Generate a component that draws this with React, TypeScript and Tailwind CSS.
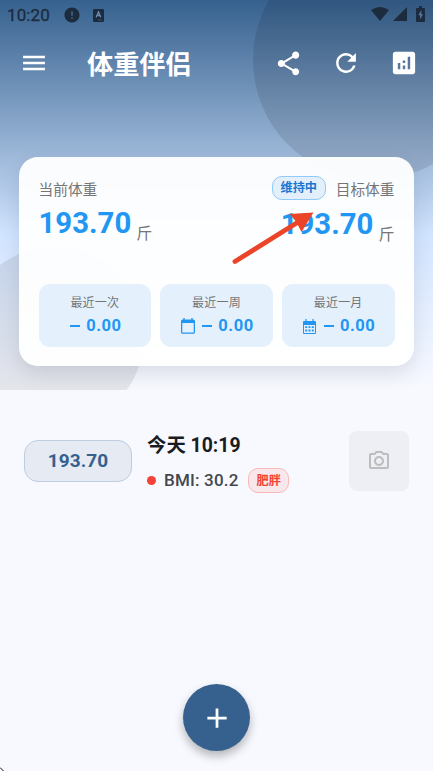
import React from 'react';
import {
  MdMenu, MdShare, MdRefresh, MdAnalytics,
  MdOutlineCameraAlt, MdAdd, MdError,
} from 'react-icons/md';

function StatusBar() {
  return (
    <div className="flex h-[30px] items-center text-[#1c2b3d]">
      <span className="ml-[7px] w-[44px] whitespace-nowrap text-[17px] leading-[30px] tracking-[0.1px] [-webkit-text-stroke:0.3px_#1c2b3d]">10:20</span>
      <MdError className="ml-[12px] size-[18px]" />
      <svg className="ml-[12px] h-[13px] w-[11px]" viewBox="0 0 11 13">
        <rect width="11" height="13" rx="1.2" fill="currentColor" />
        <path d="M3.2 8.2 5.5 2.8 7.8 8.2M4 6.5h3" fill="none" stroke="#6c8db1" strokeWidth="1.3" />
        <path d="M5.5 11h1M7.5 11h1" stroke="#6c8db1" strokeWidth=".8" />
      </svg>
      <div className="ml-auto mr-[8px] mt-[-2px] flex items-center">
        <svg className="h-[14px] w-[18px]" viewBox="0 0 18 14"><path d="M0 3Q9-3 18 3L9 14Z" fill="currentColor" /></svg>
        <svg className="ml-[4px] h-[14px] w-[14px]" viewBox="0 0 14 14"><path d="M14 0V14H0Z" fill="currentColor" /></svg>
        <svg className="ml-[9px] h-[16px] w-[9px]" viewBox="0 0 9 16">
          <path d="M3 0h3v2h2q1 0 1 1v12q0 1-1 1H1q-1 0-1-1V3q0-1 1-1h2Z" fill="currentColor" />
          <path d="M5.500 4 2.300 9.200h1.900V13.500L7 8.200H5.200Z" fill="#5379a1" />
        </svg>
      </div>
    </div>
  );
}

function Dash() {
  return <span className="h-[1.5px] w-[10px] bg-[#2196f3]" />;
}

function CalendarWeek() {
  return (
    <svg className="mr-[7px] h-[16px] w-[14px]" viewBox="0 0 14 16">
      <path d="M1.500 1.500h11Q14 1.500 14 3v11.200q0 1.500-1.500 1.500h-11Q0 15.700 0 14.200V3q0-1.500 1.500-1.500ZM1.300 5v9.400h11.400V5Z" fill="currentColor" fillRule="evenodd" />
      <path d="M3 0v2M11 0v2" stroke="currentColor" strokeWidth="1.400" />
    </svg>
  );
}

function CalendarMonth() {
  return (
    <svg className="mr-[8px] h-[15px] w-[13px]" viewBox="0 0 13 15">
      <path d="M1 2h11q1 0 1 1v11q0 1-1 1H1q-1 0-1-1V3q0-1 1-1ZM1 6v8h11V6Z" fill="currentColor" fillRule="evenodd" />
      <path d="M3 0v3M10 0v3" stroke="currentColor" strokeWidth="1.200" />
      <path d="M2.200 8.200h2M5.500 8.200h2M8.800 8.200h2M2.200 11.500h2M5.500 11.500h2M8.800 11.500h2" stroke="currentColor" strokeWidth="1.800" />
    </svg>
  );
}

function Period({ label, icon }: { label: string; icon?: React.ReactNode }) {
  return (
    <div className="flex h-[63px] flex-1 flex-col items-center rounded-[11px] bg-[#e4f1fd] pt-[10px]">
      <span className="text-[12px] leading-[18px] tracking-[0.2px] text-[#757575]">{label}</span>
      <div className="mt-[4px] flex h-[20px] items-center pl-[2px] text-[#2196f3]">
        {icon}
        <Dash />
        <span className="ml-[6px] text-[16.5px] font-bold leading-[20px] tracking-[0.55px]">0.00</span>
      </div>
    </div>
  );
}

export default function App() {
  return (
    <div className="relative flex h-[771px] w-[433px] flex-col overflow-hidden bg-[#f8f9ff] font-['Roboto','Noto_Sans_CJK_SC',sans-serif]">
      <header className="relative h-[390px] overflow-hidden bg-[linear-gradient(180deg,#36618e_0%,#d1e4ff_60%,#f8f9ff_100%)]">
        <div className="absolute left-[252.5px] top-[-60px] size-[240px] rounded-full bg-black/10" />
        <div className="absolute left-[-36px] top-[247px] size-[180px] rounded-full bg-black/[0.08]" />
        <div className="relative">
          <StatusBar />
          <div className="flex h-[66px] items-center pl-[20px] pr-[15px] text-white">
            <MdMenu className="size-[28px] scale-[1.04]" />
            <h1 className="ml-[39px] mt-[3px] text-[26.2px] font-bold leading-[36px]">体重伴侣</h1>
            <MdShare className="ml-auto size-[27px] scale-[1.06]" />
            <MdRefresh className="ml-[30px] size-[28px] scale-[1.06]" />
            <MdAnalytics className="ml-[30px] size-[28px] scale-[1.06]" />
          </div>
          <section className="mx-[19px] mt-[61px] h-[209px] rounded-[19px] bg-white/95 px-[19.5px] pt-[19px] shadow-[0_8px_20px_rgba(0,0,0,0.1)]">
            <div className="flex h-[108px] justify-between">
              <div className="pt-[3px]">
                <p className="text-[14.7px] leading-[22px] text-[#757575]">当前体重</p>
                <div className="mt-[3px] flex">
                  <span className="text-[29.3px] font-bold leading-[38px] tracking-[0.05px] text-[#2196f3]">193.70</span>
                  <span className="ml-[5px] mt-[18px] text-[16px] leading-[24px] text-[#757575]">斤</span>
                </div>
              </div>
              <div className="flex flex-col items-end">
                <div className="flex h-[24px] items-center">
                  <span className="mr-[10px] flex h-[24px] w-[54px] items-center justify-center rounded-[10px] border border-[#90caf9] bg-[#e3f0fc] pt-px text-[12.2px] font-bold text-[#1976d2]">维持中</span>
                  <p className="mt-[3px] text-[14.7px] leading-[22px] text-[#757575]">目标体重</p>
                </div>
                <div className="mt-[5px] flex">
                  <span className="text-[29.3px] font-bold leading-[38px] tracking-[0.05px] text-[#2196f3]">193.70</span>
                  <span className="ml-[5px] mt-[18px] text-[16px] leading-[24px] text-[#757575]">斤</span>
                </div>
              </div>
            </div>
            <div className="flex gap-[9px]">
              <Period label="最近一次" />
              <Period label="最近一周" icon={<CalendarWeek />} />
              <Period label="最近一月" icon={<CalendarMonth />} />
            </div>
          </section>
        </div>
        <svg className="absolute left-[230px] top-[208px] h-[58px] w-[90px]" viewBox="230 208 90 58">
          <path d="M235 261.500 299 221.500" stroke="#eb4429" strokeWidth="4.800" strokeLinecap="round" />
          <path d="M313.500 212.500 289.500 214 296 221.500 301.500 232Z" fill="#eb4429" />
        </svg>
      </header>

      <main className="flex flex-1 flex-col">
        <div className="mt-[40px] flex h-[62px] items-center pl-[24px] pr-[24px]">
          <div className="flex h-[42px] w-[108px] items-center justify-center rounded-[14px] border border-[#bfcde0] bg-[#e5eaf3] text-[19px] font-bold tracking-[0.1px] text-[#36618e]">193.70</div>
          <div className="ml-[15px] mt-[3px] flex flex-col">
            <p className="text-[19.4px] font-bold leading-[28px] text-[#191c20]">今天 10:19</p>
            <div className="mt-[8px] flex h-[25px] items-center">
              <span className="size-[9px] rounded-full bg-[#f44336]" />
              <span className="ml-[8px] text-[17px] font-medium tracking-[0.2px] text-[#43474e]">BMI: 30.2</span>
              <span className="ml-[9.5px] flex h-[25px] w-[41px] items-center justify-center rounded-[10px] border border-[#f8b9b8] bg-[#f8e7eb] pt-[2px] text-[12.2px] font-bold text-[#f44336]">肥胖</span>
            </div>
          </div>
          <div className="ml-auto flex size-[60px] items-center justify-center rounded-[8px] bg-[#eeeff4] text-[#bdbdbd]">
            <MdOutlineCameraAlt className="size-[24px]" />
          </div>
        </div>
        <button className="mx-auto mb-[20px] mt-auto flex size-[67px] items-center justify-center rounded-full bg-[#36618e] text-white shadow-[0_5px_10px_rgba(0,0,0,0.28)]">
          <MdAdd className="size-[30px] scale-[1.1]" />
        </button>
      </main>
      <svg className="absolute bottom-0 left-0 size-[4px]" viewBox="0 0 4 4"><path d="M0 .5 3.500 4" stroke="#111" strokeWidth="1" /></svg>
    </div>
  );
}
